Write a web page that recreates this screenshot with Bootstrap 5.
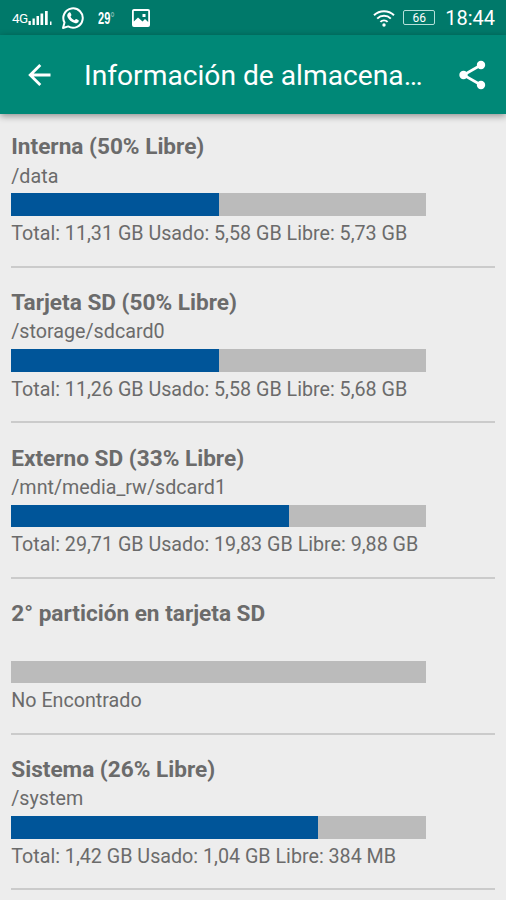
<!DOCTYPE html>
<html lang="es">
<head>
<meta charset="utf-8">
<meta name="viewport" content="width=device-width, initial-scale=1">
<title>Información de almacenamiento</title>
<link rel="stylesheet" href="https://cdn.jsdelivr.net/npm/bootstrap@5.3.0/dist/css/bootstrap.min.css">
<style>
  body { background: #ededed; color: #6b6b6b; font-family: Roboto, "Liberation Sans", sans-serif; height: 900px; overflow: hidden; }
  svg { display: block; flex: none; }
  .status { height: 35px; background: #00796a; padding: 0 11px 0 12px; }
  .net { font-size: 13.5px; line-height: 1; letter-spacing: -.6px; padding-top: 3px; }
  .temp { font-family: "Liberation Sans", sans-serif; font-size: 17px; font-weight: 700; line-height: 1; transform: scaleX(.65); transform-origin: left; width: 34px; margin-left: 13px; padding-top: 2px; }
  .batt { width: 32px; height: 15px; border: 1px solid #b5e0da; border-radius: 2px; font-size: 12px; line-height: 14px; margin: 0 10px 0 8px; }
  .clock { font-size: 20px; line-height: 1; padding-top: 1px; }
  .appbar { height: 79px; background: #008877; padding: 0 19px 0 24px; box-shadow: 0 2px 7px rgba(0,0,0,.4); }
  .appbar h1 { font-size: 28.2px; line-height: 34px; font-weight: 400; margin: 3px 0 0 30px; width: 345px; }
  .volumes { padding: 0 11.25px; margin-top: -2px; }
  .volume { height: 155.7px; border-bottom: 2.4px solid #cbcbcb; padding-top: 20.2px; }
  .volume h2 { font-size: 22.6px; line-height: 30px; font-weight: 700; margin: 0; }
  .path, .usage { font-size: 19.7px; line-height: 27px; height: 27px; white-space: nowrap; }
  .path { padding-top: .5px; }
  .progress { --bs-progress-height: 22.5px; --bs-progress-bg: #bbb; --bs-progress-border-radius: 0; --bs-progress-bar-bg: #005599; width: 414.5px; margin: 4.3px 0 4.1px; }
</style>
<script src="https://cdn.jsdelivr.net/npm/bootstrap@5.3.0/dist/js/bootstrap.bundle.min.js"></script>
</head>
<body>
<header class="position-relative z-1 text-white">
  <div class="status d-flex align-items-center">
    <span class="net">4G</span>
    <svg width="25" height="16" viewBox="0 0 25 16" fill="#fff"><path d="M.5 11h2.300v4H.5zM4.500 8.500h2.300V15H4.500zM8.500 6H11v9H8.500zM12.500 3.500h2.700V15h-2.700zM17 1h2.700v14H17zM22 11.500h1.500V15H22z"/></svg>
    <svg class="ms-2" width="24" height="24" viewBox="0 0 24 24"><path d="M2 22l1.5-5.4A9.7 9.7 0 1 1 7.2 20.4z" fill="none" stroke="#fff" stroke-width="2" stroke-linejoin="round"/><path d="M8 6.500c.5-.5 1.200-.4 1.500.2l.9 2c.3.7-.7 1.400-.9 1.900.8 1.700 2.100 2.900 3.900 3.700.7-.3 1.200-1.500 1.800-1.300l2.100 1c.7.3.5 1.200.2 1.800-.6 1.300-2.400 1.800-3.800 1.300-3.600-1.100-5.800-3.200-7.200-6C5.800 9.400 6.400 7.500 8 6.500z" fill="#fff"/></svg>
    <span class="temp">29<span class="fw-normal opacity-50">°</span></span>
    <svg width="18" height="18" viewBox="0 0 18 18"><path fill="#fff" fill-rule="evenodd" d="M2 0h14a2 2 0 0 1 2 2v14a2 2 0 0 1-2 2H2a2 2 0 0 1-2-2V2C0 .9.900 0 2 0zM1.800 2v10.500L6 8.500l4.500 4 2.500-2.500 3.200 3V2zM10.500 5h3v3h-3z"/></svg>
    <svg class="ms-auto" width="22" height="18" viewBox="0 0 22 18" fill="none" stroke="#fff" stroke-width="2"><path d="M1 6.200a14.500 14.500 0 0 1 20 0M4.200 9.600a9.800 9.800 0 0 1 13.600 0M7.400 12.900a5.200 5.200 0 0 1 7.200 0"/><circle cx="11" cy="16" r="1.700" fill="#fff" stroke="none"/></svg>
    <span class="batt text-center">66</span>
    <span class="clock">18:44</span>
  </div>
  <nav class="appbar d-flex align-items-center">
    <svg width="30" height="30" viewBox="0 0 30 30" fill="none" stroke="#fff" stroke-width="2.800"><path d="M26.500 15H6.200M16.300 5L6.200 15l10.100 10"/></svg>
    <h1 class="text-nowrap">Información de almacena…</h1>
    <svg class="ms-auto" width="28" height="30" viewBox="0 0 28 30"><path d="M22 5L4.500 15L22 25" fill="none" stroke="#fff" stroke-width="2.600"/><g fill="#fff"><circle cx="22" cy="5" r="4.200"/><circle cx="4.500" cy="15" r="4.200"/><circle cx="22" cy="25" r="4.200"/></g></svg>
  </nav>
</header>
<main class="volumes">
  <section class="volume"><h2>Interna (50% Libre)</h2><div class="path">/data</div>
    <div class="progress"><div class="progress-bar" style="width:50%"></div></div>
    <div class="usage">Total: 11,31 GB Usado: 5,58 GB Libre: 5,73 GB</div></section>
  <section class="volume"><h2>Tarjeta SD (50% Libre)</h2><div class="path">/storage/sdcard0</div>
    <div class="progress"><div class="progress-bar" style="width:50%"></div></div>
    <div class="usage">Total: 11,26 GB Usado: 5,58 GB Libre: 5,68 GB</div></section>
  <section class="volume"><h2>Externo SD (33% Libre)</h2><div class="path">/mnt/media_rw/sdcard1</div>
    <div class="progress"><div class="progress-bar" style="width:67%"></div></div>
    <div class="usage">Total: 29,71 GB Usado: 19,83 GB Libre: 9,88 GB</div></section>
  <section class="volume"><h2>2° partición en tarjeta SD</h2><div class="path"></div>
    <div class="progress"><div class="progress-bar" style="width:0%"></div></div>
    <div class="usage">No Encontrado</div></section>
  <section class="volume"><h2>Sistema (26% Libre)</h2><div class="path">/system</div>
    <div class="progress"><div class="progress-bar" style="width:74%"></div></div>
    <div class="usage">Total: 1,42 GB Usado: 1,04 GB Libre: 384 MB</div></section>
</main>
</body>
</html>
